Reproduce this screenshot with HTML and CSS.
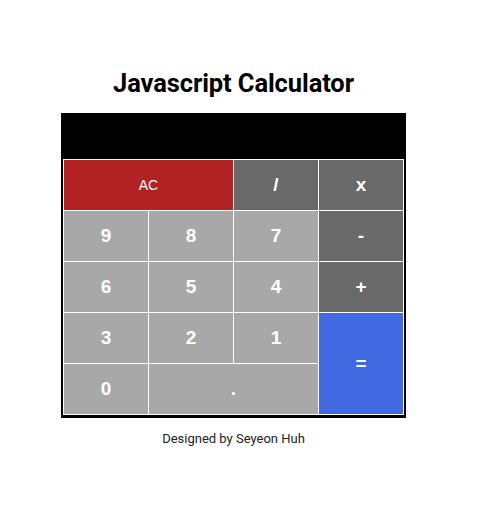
FILE: index.html
```html
<!DOCTYPE html>
<html lang="en">
<head>
<meta charset="utf-8">
<title>Javascript Calculator</title>
<link rel="stylesheet" href="styles.css">
</head>
<body>
<main class="page">
  <h1 class="title">Javascript Calculator</h1>
  <div class="calculator">
    <div class="display"></div>
    <div class="keys">
      <button class="key key-clear">AC</button>
      <button class="key key-op">/</button>
      <button class="key key-op">x</button>
      <button class="key">9</button>
      <button class="key">8</button>
      <button class="key">7</button>
      <button class="key key-op">-</button>
      <button class="key">6</button>
      <button class="key">5</button>
      <button class="key">4</button>
      <button class="key key-op">+</button>
      <button class="key">3</button>
      <button class="key">2</button>
      <button class="key">1</button>
      <button class="key key-equals">=</button>
      <button class="key">0</button>
      <button class="key key-decimal">.</button>
    </div>
  </div>
  <p class="credit">Designed by Seyeon Huh</p>
</main>
</body>
</html>
```
FILE: styles.css
```css
html, body {
  margin: 0;
  padding: 0;
  background: #ffffff;
}

.page {
  width: 467px;
  display: flex;
  flex-direction: column;
  align-items: center;
  padding-top: 68px;
  font-family: Roboto, "Liberation Sans", sans-serif;
}

.title {
  margin: 0 0 15px;
  font-size: 25.5px;
  line-height: 30px;
  font-weight: 700;
  color: #000000;
  letter-spacing: -0.1px;
}

.calculator {
  background: #000000;
  padding: 2px 2px 3px;
}

.display {
  height: 44px;
}

.keys {
  display: grid;
  grid-template-columns: repeat(4, 84px);
  grid-auto-rows: 50px;
  gap: 1px;
  padding: 1px;
  background: #ffffff;
}

.key {
  border: none;
  margin: 0;
  padding: 0;
  background: #a8a8a8;
  color: #ffffff;
  font-family: "Liberation Sans", Arial, sans-serif;
  font-size: 19px;
  font-weight: 700;
  cursor: pointer;
}

.key-clear {
  grid-column: span 2;
  background: #b22222;
  font-size: 14px;
  font-weight: 400;
}

.key-op {
  background: #696969;
}

.key-equals {
  grid-row: span 2;
  background: #4169e1;
}

.key-decimal {
  grid-column: span 2;
}

.credit {
  margin: 13px 0 0;
  font-size: 13px;
  line-height: 15px;
  color: #222222;
}
```
